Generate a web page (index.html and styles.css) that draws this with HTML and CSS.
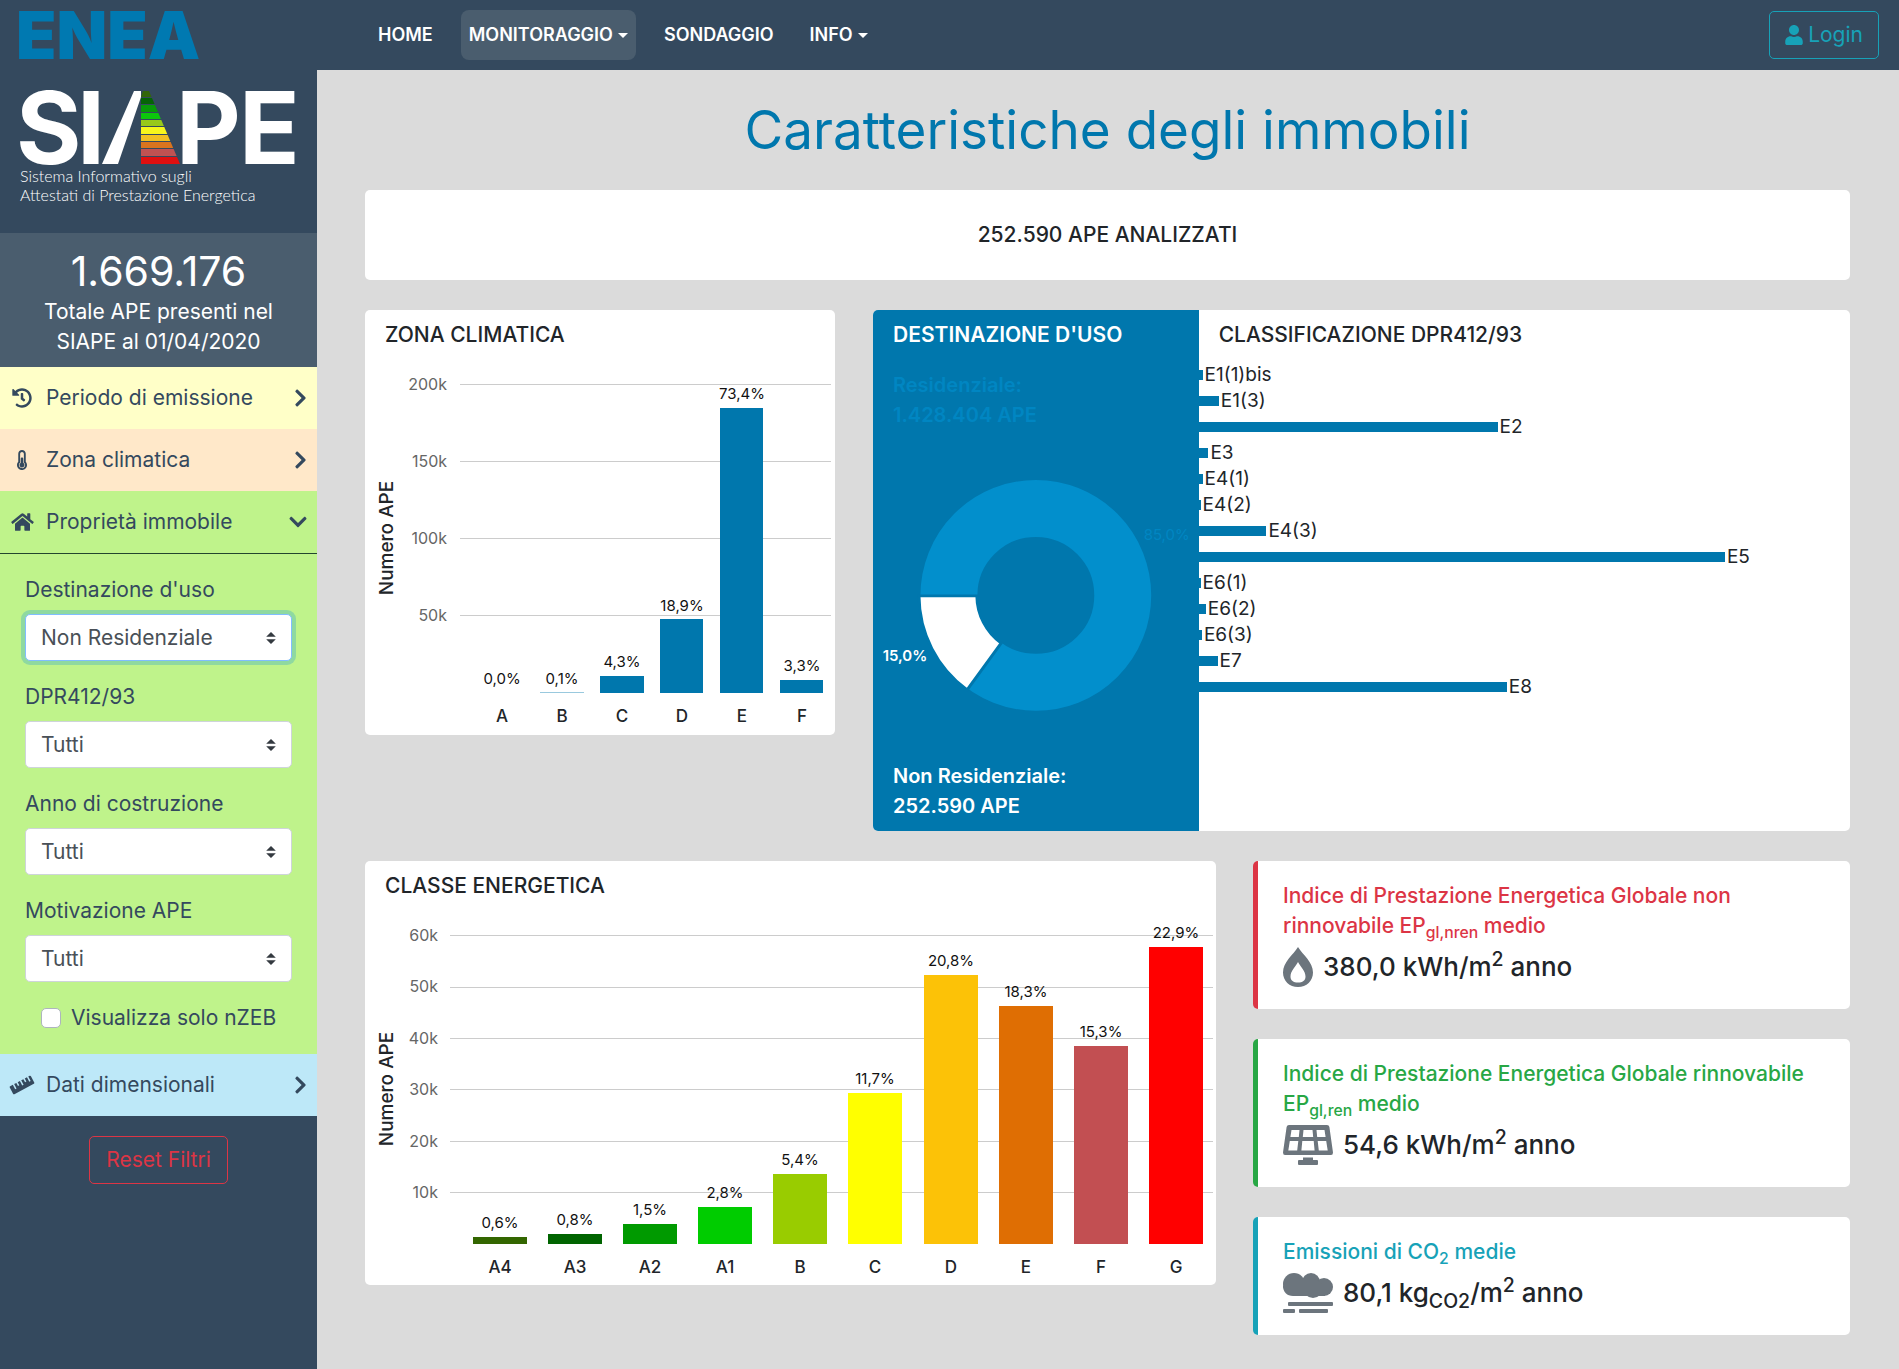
FILE: index.html
```html
<!DOCTYPE html>
<html lang="it">
<head>
<meta charset="utf-8">
<meta name="viewport" content="width=device-width, initial-scale=1">
<title>SIAPE - Caratteristiche degli immobili</title>
<link rel="stylesheet" href="styles.css">
</head>
<body>
<div class="layout">
  <aside class="sidebar">
    <a class="brand" href="#" aria-label="ENEA SIAPE">
      <svg class="brand-logo" viewBox="0 0 317 166" aria-hidden="true">
        <text class="logo-enea" x="16" y="59">ENEA</text>
        <text class="logo-siape" x="16" y="164">S</text>
        <text class="logo-siape" x="77" y="164">I</text>
        <text class="logo-siape" x="176" y="164">P</text>
        <text class="logo-siape" x="239" y="164">E</text>
        <polygon fill="#fff" points="102,164 134,91 141,91 141,97 118,164"/>
        <clipPath id="slope"><polygon points="141,97 143,91 149,91 180,164 141,164"/></clipPath>
        <g clip-path="url(#slope)">
          <rect x="141" y="91" width="40" height="6" fill="#33660a"/>
          <rect x="141" y="98" width="40" height="6" fill="#066306"/>
          <rect x="141" y="105" width="40" height="7" fill="#089a08"/>
          <rect x="141" y="113" width="40" height="6" fill="#0cc80c"/>
          <rect x="141" y="120" width="40" height="6" fill="#98c91a"/>
          <rect x="141" y="127" width="40" height="7" fill="#f6f61c"/>
          <rect x="141" y="135" width="40" height="6" fill="#f0c022"/>
          <rect x="141" y="142" width="40" height="6" fill="#d9741f"/>
          <rect x="141" y="149" width="40" height="7" fill="#c05252"/>
          <rect x="141" y="157" width="40" height="7" fill="#e01010"/>
        </g>
      </svg>
      <span class="brand-sub">Sistema Informativo sugli<br>Attestati di Prestazione Energetica</span>
    </a>
    <div class="total">
      <p class="total-number">1.669.176</p>
      <p class="total-text">Totale APE presenti nel<br>SIAPE al 01/04/2020</p>
    </div>
    <button class="menu menu-yellow" type="button">
      <span class="menu-icon"><svg width="20" height="20" viewBox="0 0 512 512"><path d="M504 255.531c.253 136.64-111.18 248.372-247.82 248.468-59.015.042-113.223-20.53-155.822-54.911-11.077-8.94-11.905-25.541-1.839-35.607l11.267-11.267c8.609-8.609 22.353-9.551 31.891-1.984C173.062 425.135 212.781 440 256 440c101.705 0 184-82.311 184-184 0-101.705-82.311-184-184-184-48.814 0-93.149 18.969-126.068 49.932l50.754 50.754c10.08 10.08 2.941 27.314-11.313 27.314H24c-8.837 0-16-7.163-16-16V38.627c0-14.254 17.234-21.393 27.314-11.314l49.372 49.372C129.209 34.136 189.552 8 256 8c136.81 0 247.747 110.78 248 247.531zm-180.912 78.784l9.823-12.63c8.138-10.463 6.253-25.542-4.21-33.679L288 256.349V152c0-13.255-10.745-24-24-24h-16c-13.255 0-24 10.745-24 24v135.651l65.409 50.874c10.463 8.137 25.541 6.253 33.679-4.21z"/></svg></span>
      <span class="menu-label">Periodo di emissione</span>
      <svg class="chevron" viewBox="0 0 320 512"><path d="M285.476 272.971L91.132 467.314c-9.373 9.373-24.569 9.373-33.941 0l-22.667-22.667c-9.357-9.357-9.375-24.522-.04-33.901L188.505 256 34.484 101.255c-9.335-9.379-9.317-24.544.04-33.901l22.667-22.667c9.373-9.373 24.569-9.373 33.941 0L285.475 239.03c9.373 9.372 9.373 24.568.001 33.941z"/></svg>
    </button>
    <button class="menu menu-peach" type="button">
      <span class="menu-icon"><svg width="10" height="20" viewBox="0 0 256 512"><path d="M192 384c0 35.346-28.654 64-64 64s-64-28.654-64-64c0-23.685 12.876-44.349 32-55.417V224c0-17.673 14.327-32 32-32s32 14.327 32 32v104.583c19.124 11.068 32 31.732 32 55.417zm32-84.653c19.912 22.563 32 52.194 32 84.653 0 70.696-57.303 128-128 128-.299 0-.609-.001-.909-.003C56.789 511.509-.357 453.636.002 383.333.166 351.135 12.215 321.755 32 299.347V96c0-53.019 42.981-96 96-96s96 42.981 96 96v203.347zM208 384c0-34.339-19.37-52.19-32-66.502V96c0-26.467-21.533-48-48-48S80 69.533 80 96v221.498c-12.732 14.428-31.825 32.1-31.999 66.08-.224 43.876 35.563 80.116 79.423 80.42L128 464c44.112 0 80-35.888 80-80z"/></svg></span>
      <span class="menu-label">Zona climatica</span>
      <svg class="chevron" viewBox="0 0 320 512"><path d="M285.476 272.971L91.132 467.314c-9.373 9.373-24.569 9.373-33.941 0l-22.667-22.667c-9.357-9.357-9.375-24.522-.04-33.901L188.505 256 34.484 101.255c-9.335-9.379-9.317-24.544.04-33.901l22.667-22.667c9.373-9.373 24.569-9.373 33.941 0L285.475 239.03c9.373 9.372 9.373 24.568.001 33.941z"/></svg>
    </button>
    <button class="menu menu-green" type="button" aria-expanded="true">
      <span class="menu-icon"><svg width="23" height="20" viewBox="0 0 576 512"><path d="M280.37 148.26L96 300.11V464a16 16 0 0 0 16 16l112.06-.29a16 16 0 0 0 15.92-16V368a16 16 0 0 1 16-16h64a16 16 0 0 1 16 16v95.64a16 16 0 0 0 16 16.05L464 480a16 16 0 0 0 16-16V300L295.67 148.26a12.19 12.19 0 0 0-15.3 0zM571.6 251.47L488 182.56V44.05a12 12 0 0 0-12-12h-56a12 12 0 0 0-12 12v72.61L318.47 43a48 48 0 0 0-61 0L4.34 251.47a12 12 0 0 0-1.6 16.9l25.5 31A12 12 0 0 0 45.15 301l235.22-193.74a12.19 12.19 0 0 1 15.3 0L530.9 301a12 12 0 0 0 16.9-1.6l25.5-31a12 12 0 0 0-1.7-16.93z"/></svg></span>
      <span class="menu-label">Proprietà immobile</span>
      <svg class="chevron chevron-down" viewBox="0 0 448 512"><path d="M207.029 381.476L12.686 187.132c-9.373-9.373-9.373-24.569 0-33.941l22.667-22.667c9.357-9.357 24.522-9.375 33.901-.04L224 284.505l154.745-154.021c9.379-9.335 24.544-9.317 33.901.04l22.667 22.667c9.373 9.373 9.373 24.569 0 33.941L240.971 381.476c-9.373 9.372-24.569 9.372-33.942 0z"/></svg>
    </button>
    <form class="filters">
      <label for="uso">Destinazione d'uso</label>
      <select id="uso" class="is-focused"><option>Non Residenziale</option></select>
      <label for="dpr">DPR412/93</label>
      <select id="dpr"><option>Tutti</option></select>
      <label for="anno">Anno di costruzione</label>
      <select id="anno"><option>Tutti</option></select>
      <label for="motivo">Motivazione APE</label>
      <select id="motivo"><option>Tutti</option></select>
      <div class="check"><input type="checkbox" id="nzeb"><label for="nzeb">Visualizza solo nZEB</label></div>
    </form>
    <button class="menu menu-blue" type="button">
      <span class="menu-icon"><svg width="26" height="20" viewBox="0 0 26 20"><g transform="rotate(-28 13 10)"><path d="M2 5.500h3v5h1.500v-5h2.500v3.500h1.500v-3.500h2.500v5h1.500v-5h2.500v3.500h1.500v-3.500h2.500v5h1.500v-5h1.500a1 1 0 0 1 1 1v7a1 1 0 0 1-1 1h-22a1 1 0 0 1-1-1v-7a1 1 0 0 1 1-1z"/></g></svg></span>
      <span class="menu-label">Dati dimensionali</span>
      <svg class="chevron" viewBox="0 0 320 512"><path d="M285.476 272.971L91.132 467.314c-9.373 9.373-24.569 9.373-33.941 0l-22.667-22.667c-9.357-9.357-9.375-24.522-.04-33.901L188.505 256 34.484 101.255c-9.335-9.379-9.317-24.544.04-33.901l22.667-22.667c9.373-9.373 24.569-9.373 33.941 0L285.475 239.03c9.373 9.372 9.373 24.568.001 33.941z"/></svg>
    </button>
    <button class="btn btn-reset" type="button">Reset Filtri</button>
  </aside>

  <div class="page">
    <header class="navbar">
      <nav class="nav">
        <a href="#">HOME</a>
        <a href="#" class="active">MONITORAGGIO<span class="caret"></span></a>
        <a href="#">SONDAGGIO</a>
        <a href="#">INFO<span class="caret"></span></a>
      </nav>
      <button class="btn btn-login" type="button"><svg width="18" height="20" viewBox="0 0 448 512"><path d="M224 256c70.700 0 128-57.300 128-128S294.700 0 224 0 96 57.300 96 128s57.300 128 128 128zm89.600 32h-16.700c-22.200 10.200-46.900 16-72.900 16s-50.600-5.800-72.900-16h-16.700C60.200 288 0 348.200 0 422.400V464c0 26.500 21.500 48 48 48h352c26.500 0 48-21.500 48-48v-41.600c0-74.200-60.200-134.400-134.400-134.400z"/></svg>Login</button>
    </header>

    <main class="content">
      <h1>Caratteristiche degli immobili</h1>
      <p class="card summary">252.590 APE ANALIZZATI</p>

      <div class="row row-top">
        <section class="card">
          <h2>ZONA CLIMATICA</h2>
          <svg class="chart" viewBox="0 0 470 375" role="img" aria-label="Numero APE per zona climatica">
            <path class="grid" d="M95 24.500H466M95 101.500H466M95 178.500H466M95 255.500H466"/>
            <g class="tick"><text x="82" y="30">200k</text><text x="82" y="107">150k</text><text x="82" y="184">100k</text><text x="82" y="261">50k</text></g>
            <text class="axis" transform="translate(28 178) rotate(-90)">Numero APE</text>
            <g fill="#0077ad">
              <rect x="175" y="332" width="44" height="1" opacity=".4"/>
              <rect x="235" y="316" width="44" height="17"/>
              <rect x="295" y="259" width="43" height="74"/>
              <rect x="355" y="48" width="43" height="285"/>
              <rect x="415" y="320" width="43" height="13"/>
            </g>
            <g class="value"><text x="137" y="324">0,0%</text><text x="197" y="324">0,1%</text><text x="257" y="307">4,3%</text><text x="317" y="251">18,9%</text><text x="377" y="39">73,4%</text><text x="437" y="311">3,3%</text></g>
            <g class="category"><text x="137" y="362">A</text><text x="197" y="362">B</text><text x="257" y="362">C</text><text x="317" y="362">D</text><text x="377" y="362">E</text><text x="437" y="362">F</text></g>
          </svg>
        </section>

        <section class="card usage">
          <div class="usage-pie">
            <h2>DESTINAZIONE D'USO</h2>
            <p class="usage-off">Residenziale:<br>1.428.404 APE</p>
            <svg class="chart" viewBox="0 0 326 231" role="img" aria-label="Residenziale 85,0%, Non Residenziale 15,0%">
              <circle cx="163" cy="115.500" r="87" fill="none" stroke="#028fcc" stroke-width="57"/>
              <path fill="#fff" stroke="#0077ad" stroke-width="3" d="M46 116A117 117 0 0 0 94.200 210.200L128.300 163.200A59 59 0 0 1 104 116Z"/>
              <text class="pie-off" x="294" y="60">85,0%</text>
              <text class="pie-on" x="32" y="181">15,0%</text>
            </svg>
            <p>Non Residenziale:<br>252.590 APE</p>
          </div>
          <div class="usage-list">
            <h2>CLASSIFICAZIONE DPR412/93</h2>
            <ul>
              <li><span class="bar" style="width:0.6%"></span>E1(1)bis</li>
              <li><span class="bar" style="width:3.1%"></span>E1(3)</li>
              <li><span class="bar" style="width:45.9%"></span>E2</li>
              <li><span class="bar" style="width:1.5%"></span>E3</li>
              <li><span class="bar" style="width:0.6%"></span>E4(1)</li>
              <li><span class="bar" style="width:0.3%"></span>E4(2)</li>
              <li><span class="bar" style="width:10.4%"></span>E4(3)</li>
              <li><span class="bar" style="width:80.8%"></span>E5</li>
              <li><span class="bar" style="width:0.3%"></span>E6(1)</li>
              <li><span class="bar" style="width:1.1%"></span>E6(2)</li>
              <li><span class="bar" style="width:0.5%"></span>E6(3)</li>
              <li><span class="bar" style="width:2.9%"></span>E7</li>
              <li><span class="bar" style="width:47.3%"></span>E8</li>
            </ul>
          </div>
        </section>
      </div>

      <div class="row row-bottom">
        <section class="card">
          <h2>CLASSE ENERGETICA</h2>
          <svg class="chart" viewBox="0 0 851 374" role="img" aria-label="Numero APE per classe energetica">
            <path class="grid" d="M85 24.500H848M85 76.500H848M85 127.500H848M85 178.500H848M85 230.500H848M85 281.500H848"/>
            <g class="tick"><text x="73" y="30">60k</text><text x="73" y="81">50k</text><text x="73" y="133">40k</text><text x="73" y="184">30k</text><text x="73" y="236">20k</text><text x="73" y="287">10k</text></g>
            <text class="axis" transform="translate(28 178) rotate(-90)">Numero APE</text>
            <rect x="108" y="326" width="54" height="7" fill="#336600"/>
            <rect x="183" y="323" width="54" height="10" fill="#006400"/>
            <rect x="258" y="313" width="54" height="20" fill="#009a00"/>
            <rect x="333" y="296" width="54" height="37" fill="#00cc00"/>
            <rect x="408" y="263" width="54" height="70" fill="#99cc00"/>
            <rect x="483" y="182" width="54" height="151" fill="#ffff00"/>
            <rect x="559" y="64" width="54" height="269" fill="#fcc207"/>
            <rect x="634" y="95" width="54" height="238" fill="#df6e03"/>
            <rect x="709" y="135" width="54" height="198" fill="#c24f52"/>
            <rect x="784" y="36" width="54" height="297" fill="#ff0000"/>
            <g class="value"><text x="135" y="317">0,6%</text><text x="210" y="314">0,8%</text><text x="285" y="304">1,5%</text><text x="360" y="287">2,8%</text><text x="435" y="254">5,4%</text><text x="510" y="173">11,7%</text><text x="586" y="55">20,8%</text><text x="661" y="86">18,3%</text><text x="736" y="126">15,3%</text><text x="811" y="27">22,9%</text></g>
            <g class="category"><text x="135" y="362">A4</text><text x="210" y="362">A3</text><text x="285" y="362">A2</text><text x="360" y="362">A1</text><text x="435" y="362">B</text><text x="510" y="362">C</text><text x="586" y="362">D</text><text x="661" y="362">E</text><text x="736" y="362">F</text><text x="811" y="362">G</text></g>
          </svg>
        </section>

        <div class="indexes">
          <section class="card index index-red">
            <p class="index-title">Indice di Prestazione Energetica Globale non rinnovabile EP<sub>gl,nren</sub> medio</p>
            <p class="index-value"><svg width="30" height="40" viewBox="0 0 30 40"><path fill-rule="evenodd" d="M15 0C20 8 30 15 30 25.500C30 34 23.500 40 15 40S0 34 0 25.500C0 15 10 8 15 0ZM15 15C12.500 20 7.500 24 7.500 29.500C7.500 33.500 10.500 35.500 15 35.500S22.500 33.500 22.500 29.500C22.500 24 17.500 20 15 15Z"/></svg><span>380,0 kWh/m<sup>2</sup> anno</span></p>
          </section>
          <section class="card index index-green">
            <p class="index-title">Indice di Prestazione Energetica Globale rinnovabile EP<sub>gl,ren</sub> medio</p>
            <p class="index-value"><svg width="50" height="40" viewBox="0 0 50 40"><path fill-rule="evenodd" d="M6 0H44Q46 0 46.400 2L50 27.500Q50 30 48 30H2Q0 30 0 27.500L3.600 2Q4 0 6 0ZM8.500 5L7.400 12H15.800L16.500 5ZM20.500 5L19.800 12H30.200L29.500 5ZM33.500 5L34.200 12H42.600L41.500 5ZM6.800 16L5.300 25.500H14.200L15.300 16ZM19.300 16L18.400 25.500H31.600L30.700 16ZM34.700 16L35.800 25.500H44.700L43.200 16ZM20 32.500H30V35H34Q35 35 35 36V39Q35 40 34 40H16Q15 40 15 39V36Q15 35 16 35H20Z"/></svg><span>54,6 kWh/m<sup>2</sup> anno</span></p>
          </section>
          <section class="card index index-teal">
            <p class="index-title">Emissioni di CO<sub>2</sub> medie</p>
            <p class="index-value"><svg width="50" height="40" viewBox="0 0 50 40"><circle cx="11" cy="11" r="11"/><circle cx="28" cy="9" r="9"/><circle cx="41" cy="14" r="9"/><circle cx="30" cy="15.500" r="9.500"/><path d="M8 5h22l12 8v10H10c-6 0-10-4-10-10z"/><rect x="5" y="29" width="45" height="4" rx="1"/><rect y="36" width="12" height="4" rx="1"/><rect x="16" y="36" width="29" height="4" rx="1"/></svg><span>80,1 kg<sub>CO2</sub>/m<sup>2</sup> anno</span></p>
          </section>
        </div>
      </div>
    </main>
  </div>
</div>
</body>
</html>
```
FILE: styles.css
```css
*,
*::before,
*::after { box-sizing: border-box; }

body {
  margin: 0;
  font: 400 21px/30px Inter, "Open Sans", sans-serif;
  color: #212529;
  background: #dbdbdb;
}

h1, h2, p, ul { margin: 0; padding: 0; }
ul { list-style: none; }
a { color: inherit; text-decoration: none; }
button, select { font: inherit; }
svg { fill: currentColor; }

.layout { display: flex; min-height: 100vh; }

/* Sidebar */
.sidebar {
  flex: 0 0 317px;
  display: flex;
  flex-direction: column;
  background: #34495e;
  color: #34495e;
}

.brand { display: block; padding-bottom: 29px; color: #fff; }
.brand-logo { display: block; width: 100%; height: auto; overflow: visible; }
.logo-enea { font: 900 66px Inter, sans-serif; fill: #0079b1; }
.logo-siape { font: 700 100px Inter, sans-serif; fill: #fff; }
.brand-sub { display: block; padding-left: 20px; font: 300 16px/19px Lato, sans-serif; }

.total { padding: 12px 20px 10px; background: #4a5d6e; color: #fff; text-align: center; }
.total-number { font-size: 41px; line-height: 52px; }

.menu {
  display: flex;
  align-items: center;
  gap: 9px;
  height: 62px;
  padding: 0 10px 0 7px;
  border: 0;
  color: #34495e;
  text-align: left;
}
.menu-icon { display: flex; justify-content: center; width: 30px; }
.menu-label { flex: 1; }
.menu-yellow { background: #ffffc8; }
.menu-peach { background: #ffe8c9; }
.menu-green { height: 63px; background: #bff38b; border-bottom: 1px solid #22452e; }
.menu-blue { background: #bde8f8; }
.chevron { width: 13px; height: 20px; }
.chevron-down { width: 18px; }

.filters {
  display: flex;
  flex-direction: column;
  padding: 21px 25px;
  background: #bff38b;
}
.filters > label { margin-bottom: 9px; }
.filters select {
  height: 47px;
  margin-bottom: 21px;
  padding: 0 40px 0 15px;
  border: 1px solid #ced4da;
  border-radius: 5px;
  appearance: none;
  color: #495057;
  background: #fff url("data:image/svg+xml,%3Csvg xmlns='http://www.w3.org/2000/svg' viewBox='0 0 4 5'%3E%3Cpath fill='%23343a40' d='M2 0L0 2h4zm0 5L0 3h4z'/%3E%3C/svg%3E") no-repeat right 15px center / 10px 12px;
}
.filters .is-focused { border-color: #80bdff; box-shadow: 0 0 0 4px #8fd9a0; }
.check { display: flex; align-items: center; gap: 10px; padding-left: 16px; }
.check input {
  appearance: none;
  width: 20px;
  height: 20px;
  margin: 0;
  border: 1px solid #adb5bd;
  border-radius: 5px;
  background: #fff;
}

.btn {
  height: 48px;
  border: 1px solid;
  border-radius: 5px;
  background: transparent;
}
.btn-reset { align-self: center; margin-top: 20px; padding: 0 16px; color: #dc3545; }
.btn-login { display: flex; align-items: center; gap: 5px; padding: 0 15px; color: #17a2b8; }

/* Top bar */
.page { flex: 1; min-width: 0; }
.navbar {
  display: flex;
  align-items: center;
  justify-content: space-between;
  height: 70px;
  padding: 0 20px 0 53px;
  background: #34495e;
  color: #fff;
}
.nav { display: flex; gap: 20px; font-size: 18px; font-weight: 600; }
.nav a { display: flex; align-items: center; gap: 5px; height: 50px; padding: 0 8px; border-radius: 8px; }
.nav .active { background: #4a5d6e; }
.caret { border: 5px solid transparent; border-top-color: currentColor; border-bottom: 0; }

/* Content */
.content { padding: 0 49px 34px 48px; }
h1 { padding: 30px 0; font-size: 53px; line-height: 60px; font-weight: 400; color: #0077ad; text-align: center; }
h2 { padding: 0 20px; font-size: 21px; line-height: 50px; font-weight: 500; }
.card { overflow: hidden; border-radius: 5px; background: #fff; }
.summary { font-weight: 500; line-height: 90px; text-align: center; }

.row { display: grid; align-items: start; gap: 38px; margin-top: 30px; }
.row-top { grid-template-columns: 470fr 977fr; }
.row-bottom { grid-template-columns: 851fr 597fr; gap: 37px; }

.chart { display: block; width: 100%; height: auto; }
.grid { stroke: #ccc; stroke-width: 1; }
.tick { font-size: 16px; fill: #666; text-anchor: end; }
.value { font-size: 15px; fill: #111; text-anchor: middle; }
.category { font-size: 17px; font-weight: 500; text-anchor: middle; }
.axis { font-size: 19px; font-weight: 500; text-anchor: middle; }

.usage { display: grid; grid-template-columns: 1fr 2fr; }
.usage-pie { padding-bottom: 10px; background: #0077ad; color: #fff; }
.usage-pie h2 { font-weight: 600; }
.usage-pie p { padding: 0 20px; font-size: 20px; font-weight: 600; }
.usage-pie .usage-off { padding-top: 10px; color: #0086c2; }
.usage-pie .chart { margin: 50px 0; }
.pie-off { font-size: 15px; fill: #0086c2; text-anchor: middle; }
.pie-on { font-size: 15px; font-weight: 600; fill: #fff; text-anchor: middle; }

.usage-list li { display: flex; align-items: center; gap: 2px; height: 26px; font-size: 19px; }
.usage-list ul { padding-top: 2px; }
.bar { flex: none; height: 10px; background: #0077ad; }

.indexes { display: grid; gap: 30px; }
.index { padding: 20px 20px 20px 25px; border-left: 5px solid; }
.index-red { border-color: #dc3545; }
.index-green { border-color: #28a745; }
.index-teal { border-color: #17a2b8; }
.index-title { font-weight: 500; }
.index-red .index-title { color: #dc3545; }
.index-green .index-title { color: #28a745; }
.index-teal .index-title { color: #17a2b8; }
.index-value { display: flex; align-items: center; gap: 10px; height: 48px; padding-top: 4px; font-size: 26px; font-weight: 500; }
.index-value svg { flex: none; fill: #6c757d; }
sub, sup { font-size: 75%; line-height: 0; }
```
